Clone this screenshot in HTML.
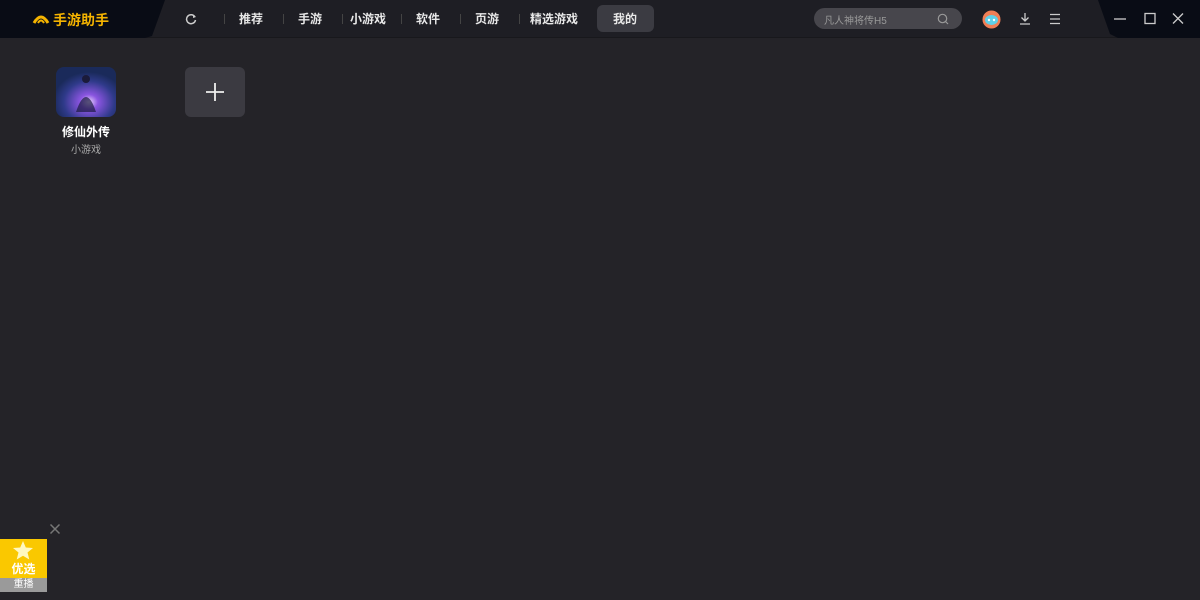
<!DOCTYPE html>
<html><head><meta charset="utf-8"><style>
*{margin:0;padding:0;box-sizing:border-box}
body{width:1200px;height:600px;background:#242328;font-family:"Liberation Sans","Noto Sans CJK SC",sans-serif;position:relative;overflow:hidden;color:#fff}
.top{position:absolute;left:0;top:0;width:1200px;height:38px;background:#1e1e24;border-bottom:1px solid #18181c}
.nav a{position:absolute;top:10px;font-size:12px;color:#e8e8e8;font-weight:bold}
.sep{position:absolute;top:14px;width:1px;height:10px;background:#444}
</style></head><body>
<div class="top">
<svg width="1200" height="38" style="position:absolute;left:0;top:0">
<polygon points="0,0 165,0 152,36 145,38 0,38" fill="#090c15"/>
<polygon points="1098,0 1200,0 1200,38 1118,38 1110,34" fill="#090c15"/>
</svg>
<svg style="position:absolute;left:32px;top:12px" width="18" height="14"><path d="M2 11 Q9 -1 16 11" stroke="#f5b400" stroke-width="3" fill="none"/><path d="M6 11 Q9 6 12 11" stroke="#f5b400" stroke-width="2" fill="none"/></svg>
<div style="position:absolute;left:53px;top:10px;font-size:14px;font-weight:bold;color:#f5b400">手游助手</div>
<svg style="position:absolute;left:185px;top:13px" width="12" height="12"><path d="M10 4 A4.5 4.5 0 1 0 10.5 7" stroke="#ccc" stroke-width="1.5" fill="none"/><path d="M8 2 L11 4 L8 5" fill="#ccc"/></svg>
<div class="nav">
<div class="sep" style="left:224px"></div><a style="left:239px">推荐</a>
<div class="sep" style="left:283px"></div><a style="left:298px">手游</a>
<div class="sep" style="left:342px"></div><a style="left:350px">小游戏</a>
<div class="sep" style="left:401px"></div><a style="left:416px">软件</a>
<div class="sep" style="left:460px"></div><a style="left:475px">页游</a>
<div class="sep" style="left:519px"></div><a style="left:530px">精选游戏</a>
<div style="position:absolute;left:597px;top:5px;width:57px;height:27px;border-radius:6px;background:#3b3b42"></div><a style="left:613px">我的</a>
</div>
<div style="position:absolute;left:814px;top:8px;width:148px;height:21px;border-radius:11px;background:#47464c;font-size:10px;color:#999;padding:4px 0 0 10px">凡人神将传H5</div>
<svg style="position:absolute;left:937px;top:13px" width="12" height="12"><circle cx="5.5" cy="5.5" r="4.2" stroke="#999" stroke-width="1.2" fill="none"/><path d="M8.5 8.5 L11 11" stroke="#999" stroke-width="1.2"/></svg>
<svg style="position:absolute;left:982px;top:10px" width="19" height="19"><circle cx="9.5" cy="9.5" r="9" fill="#f07e55"/><ellipse cx="9.5" cy="10" rx="6.5" ry="5" fill="#5fd0e8"/><circle cx="7" cy="10" r="1.2" fill="#fff"/><circle cx="12" cy="10" r="1.2" fill="#fff"/></svg>
<svg style="position:absolute;left:1019px;top:12px" width="12" height="14"><path d="M6 1 V9 M2.5 5.5 L6 9 L9.5 5.5 M1 12 H11" stroke="#ccc" stroke-width="1.3" fill="none"/></svg>
<svg style="position:absolute;left:1049px;top:13px" width="12" height="12"><path d="M1 1.5H11M1 6H11M1 10.5H11" stroke="#ccc" stroke-width="1.3"/></svg>
<svg style="position:absolute;left:1112px;top:11px" width="80" height="16"><path d="M2 8H14" stroke="#ccc" stroke-width="1.3"/><rect x="33" y="2.5" width="10" height="10" stroke="#ccc" stroke-width="1.3" fill="none"/><path d="M61 2.5 L71 12.5 M71 2.5 L61 12.5" stroke="#ccc" stroke-width="1.3"/></svg>
</div>
<svg style="position:absolute;left:56px;top:67px" width="60" height="50"><defs><radialGradient id="g" cx="0.55" cy="0.7" r="0.6"><stop offset="0" stop-color="#e9d4ff"/><stop offset="0.25" stop-color="#8a55e0"/><stop offset="0.7" stop-color="#2f3a8a"/><stop offset="1" stop-color="#1a2a5a"/></radialGradient></defs><rect width="60" height="50" rx="8" fill="url(#g)"/><path d="M20 45 Q30 15 40 45Z" fill="#1b1b40" opacity=".7"/><circle cx="30" cy="12" r="4" fill="#1b1b3a"/></svg>
<div style="position:absolute;left:56px;top:123px;width:60px;text-align:center;font-size:12px;font-weight:bold">修仙外传</div>
<div style="position:absolute;left:56px;top:141px;width:60px;text-align:center;font-size:10px;color:#aaa">小游戏</div>
<div style="position:absolute;left:185px;top:67px;width:60px;height:50px;border-radius:6px;background:#3b3a41"></div>
<svg style="position:absolute;left:205px;top:82px" width="20" height="20"><path d="M10 1V19M1 10H19" stroke="#eee" stroke-width="1.8"/></svg>
<svg style="position:absolute;left:49px;top:523px" width="12" height="12"><path d="M1.5 1.5L10.5 10.5M10.5 1.5L1.5 10.5" stroke="#777" stroke-width="1.5"/></svg>
<div style="position:absolute;left:0;top:539px;width:47px;height:39px;background:#fac800"></div>
<svg style="position:absolute;left:12px;top:540px" width="22" height="20"><polygon points="11,1 13.8,7.5 21,8 15.5,12.5 17.3,19.5 11,15.7 4.7,19.5 6.5,12.5 1,8 8.2,7.5" fill="#fff8c0"/></svg>
<div style="position:absolute;left:0;top:560px;width:47px;text-align:center;font-size:12px;font-weight:bold;color:#fff">优选</div>
<div style="position:absolute;left:0;top:578px;width:47px;height:14px;background:#9a9a9a;text-align:center;font-size:10px;color:#fff;line-height:14px">重播</div>
</body></html>
